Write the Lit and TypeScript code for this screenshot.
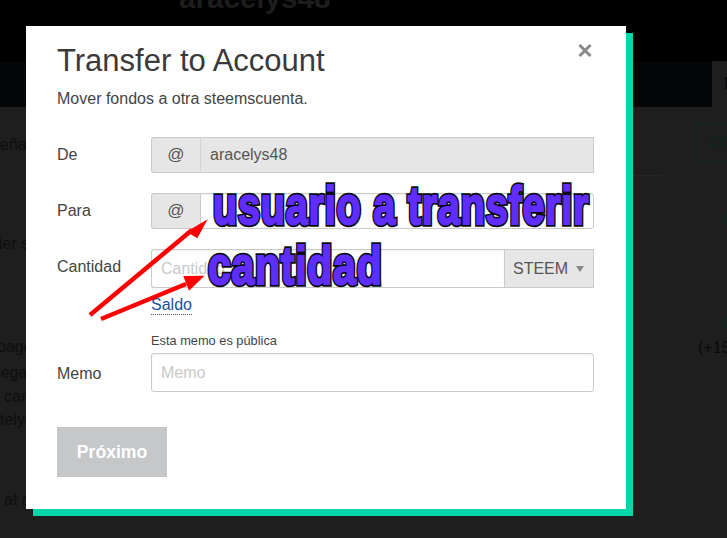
import { LitElement, html, css } from "lit";
import { customElement } from "lit/decorators.js";

@customElement("app-root")
export class AppRoot extends LitElement {
  static styles = css`
    :host { display: block; position: relative; width: 727px; height: 538px; overflow: hidden; background: #1e1e1e; font-family: "Liberation Sans", Arial, sans-serif; color: #333; }
    * { box-sizing: border-box; }
    .top { height: 61px; background: #000; overflow: hidden; display: flex; padding-left: 179px; }
    .top h2 { margin: -18px 0 0; font-size: 29.6px; line-height: 32px; font-weight: 700; color: #1d1d1d; }
    .nav { height: 46px; background: #040507; display: flex; justify-content: flex-end; }
    .tab { width: 15px; background: #1e1e1e; color: #060606; font-size: 16px; line-height: 46px; padding-left: 12px; overflow: hidden; }
    .body { display: flex; justify-content: space-between; color: #0e0e0e; font-size: 16px; }
    .left { width: 26px; padding-top: 28px; white-space: nowrap; overflow: hidden; }
    .left div { line-height: 20px; }
    .l1 { margin-bottom: 79px; }
    .l2 { margin-left: -1px; margin-bottom: 83px; }
    .l3 { margin-bottom: 6px; margin-left: -3px; }
    .l4 { margin-bottom: 4px; margin-left: -3px; }
    .l5 { margin-left: 4px; margin-bottom: 3px; }
    .l6 { margin-bottom: 60px; }
    .l7 { margin-left: 4px; }
    .right { width: 94px; overflow: hidden; white-space: nowrap; padding-top: 16px; }
    .connect { width: 60px; height: 39px; margin-left: 60px; border: 1px solid #0f2a22; border-radius: 3px; color: #0b241d; font-size: 16px; line-height: 37px; padding-left: 14px; }
    .sep { width: 29px; height: 1px; margin-top: 13px; background: #262626; }
    .num { color: #0a2a22; padding-left: 89px; line-height: 20px; }
    .n1 { margin-top: 34px; }
    .n2 { margin-top: 83px; }
    .n3 { padding-left: 65px; color: #0a0a0a; margin-top: 5px; }

    .modal { position: absolute; left: 26px; top: 26px; width: 600px; height: 483px; background: #fff; box-shadow: 7px 7px 0 0 #06d6a9; padding: 15px 32px 32px 31px; }
    .close { position: absolute; left: 552px; top: 18px; width: 14px; height: 13px; display: block; }
    h1 { margin: 0; font-size: 31px; line-height: 40px; font-weight: 400; color: #3a3a3a; }
    .sub { margin: 8px 0 0; font-size: 16px; line-height: 20px; color: #444; }
    form { margin-top: 28px; display: grid; grid-template-columns: 94px 443px; }
    label { font-size: 16px; line-height: 20px; color: #444; align-self: start; margin-top: 8px; }
    .group { display: flex; height: 36px; margin-bottom: 20px; }
    .at { width: 49px; flex: none; background: #e6e6e6; border: 1px solid #cacaca; border-right: 0; border-radius: 3px 0 0 3px; display: flex; align-items: center; justify-content: center; font-size: 17px; color: #555; }
    input { flex: 1; min-width: 0; height: 100%; border: 1px solid #cacaca; padding: 0 9px; font: 16px "Liberation Sans", Arial, sans-serif; color: #555; background: #fff; outline: none; box-shadow: inset 0 1px 2px rgba(0,0,0,.06); }
    input::placeholder { color: #c9c9c9; opacity: 1; }
    .at + input { border-radius: 0 3px 3px 0; }
    input[disabled] { background: #e6e6e6; border-radius: 0; box-shadow: none; border-left-color: #d4d4d4; }
    .amount { height: 39px; margin-bottom: 0; }
    .amount input { border-radius: 3px 0 0 3px; border-right: 0; }
    .asset { width: 90px; flex: none; background: #e6e6e6; border: 1px solid #cacaca; display: flex; align-items: center; gap: 8px; padding-left: 8px; font-size: 16px; color: #555; }
    .caret { width: 0; height: 0; border-left: 4px solid transparent; border-right: 4px solid transparent; border-top: 6px solid #888; }
    .saldo { grid-column: 2; margin-top: 7px; height: 20px; }
    .saldo a { color: #1a5099; font-size: 16px; line-height: 19px; display: inline-block; border-bottom: 1px dotted #555; text-decoration: none; }
    .hint { grid-column: 2; margin-top: 17px; font-size: 12.8px; line-height: 18px; color: #444; }
    .lbl-m { align-self: end; margin: 0; padding-bottom: 8px; }
    .memo { height: 39px; margin: 3px 0 0; }
    .memo input { border-radius: 3px; }
    button { display: block; margin-top: 35px; width: 110px; height: 50px; border: 0; background: #c6c7c9; color: #fff; font: 700 17.6px "Liberation Sans", Arial, sans-serif; }

    .arrows { position: absolute; left: 0; top: 0; width: 727px; height: 538px; pointer-events: none; }
    .note { position: absolute; white-space: nowrap; font-weight: 700; font-size: 53px; line-height: 62px; letter-spacing: 1px; color: #5f2eff; -webkit-text-stroke: 2px #5f2eff; transform-origin: 0 0; }
    .note::before { content: attr(data-t); position: absolute; left: 0; top: 0; z-index: -1; -webkit-text-stroke: 5.5px #0c0c14; color: #0c0c14; }
    .n-user { left: 213px; top: 175px; transform: scaleX(0.748); }
    .n-qty { left: 208px; top: 235px; transform: scaleX(0.772); }
  `;

  render() {
    return html`
      <div class="top"><h2>aracelys48</h2></div>
      <div class="nav"><div class="tab">M</div></div>
      <div class="body">
        <div class="left">
          <div class="l1">eña</div>
          <div class="l2">ier s</div>
          <div class="l3">pago</div>
          <div class="l4">lega</div>
          <div class="l5">can</div>
          <div class="l6">tely</div>
          <div class="l7">at a</div>
        </div>
        <div class="right">
          <div class="connect">CO</div>
          <div class="sep"></div>
          <div class="num n1">0</div>
          <div class="num n2">0</div>
          <div class="num n3">(+15</div>
        </div>
      </div>

      <div class="modal">
        <svg class="close" viewBox="0 0 14 13" aria-label="Cerrar">
          <path d="M1.5 1 L12.5 12 M12.5 1 L1.5 12" stroke="#8a8a8a" stroke-width="3" fill="none" />
        </svg>
        <h1>Transfer to Account</h1>
        <p class="sub">Mover fondos a otra steemscuenta.</p>
        <form @submit=${(e: Event) => e.preventDefault()}>
          <label>De</label>
          <div class="group"><span class="at">@</span><input disabled value="aracelys48" /></div>
          <label>Para</label>
          <div class="group"><span class="at">@</span><input /></div>
          <label>Cantidad</label>
          <div class="group amount">
            <input placeholder="Cantidad" />
            <div class="asset">STEEM<span class="caret"></span></div>
          </div>
          <div class="saldo"><a href="#">Saldo</a></div>
          <div class="hint">Esta memo es pública</div>
          <label class="lbl-m">Memo</label>
          <div class="group memo"><input placeholder="Memo" /></div>
        </form>
        <button>Próximo</button>
      </div>

      <svg class="arrows" viewBox="0 0 727 538">
        <path d="M90 315 L192 230" stroke="#fe0000" stroke-width="4.5" fill="none" />
        <path d="M207.7 219.3 L186.5 231.7 L197.3 238.3 Z" fill="#fe0000" />
        <path d="M101 319 L186 284" stroke="#fe0000" stroke-width="4.5" fill="none" />
        <path d="M204.5 275.7 L183.3 276 L189 290.7 Z" fill="#fe0000" />
      </svg>
      <div class="note n-user" data-t="usuario a transferir">usuario a transferir</div>
      <div class="note n-qty" data-t="cantidad">cantidad</div>
    `;
  }
}
